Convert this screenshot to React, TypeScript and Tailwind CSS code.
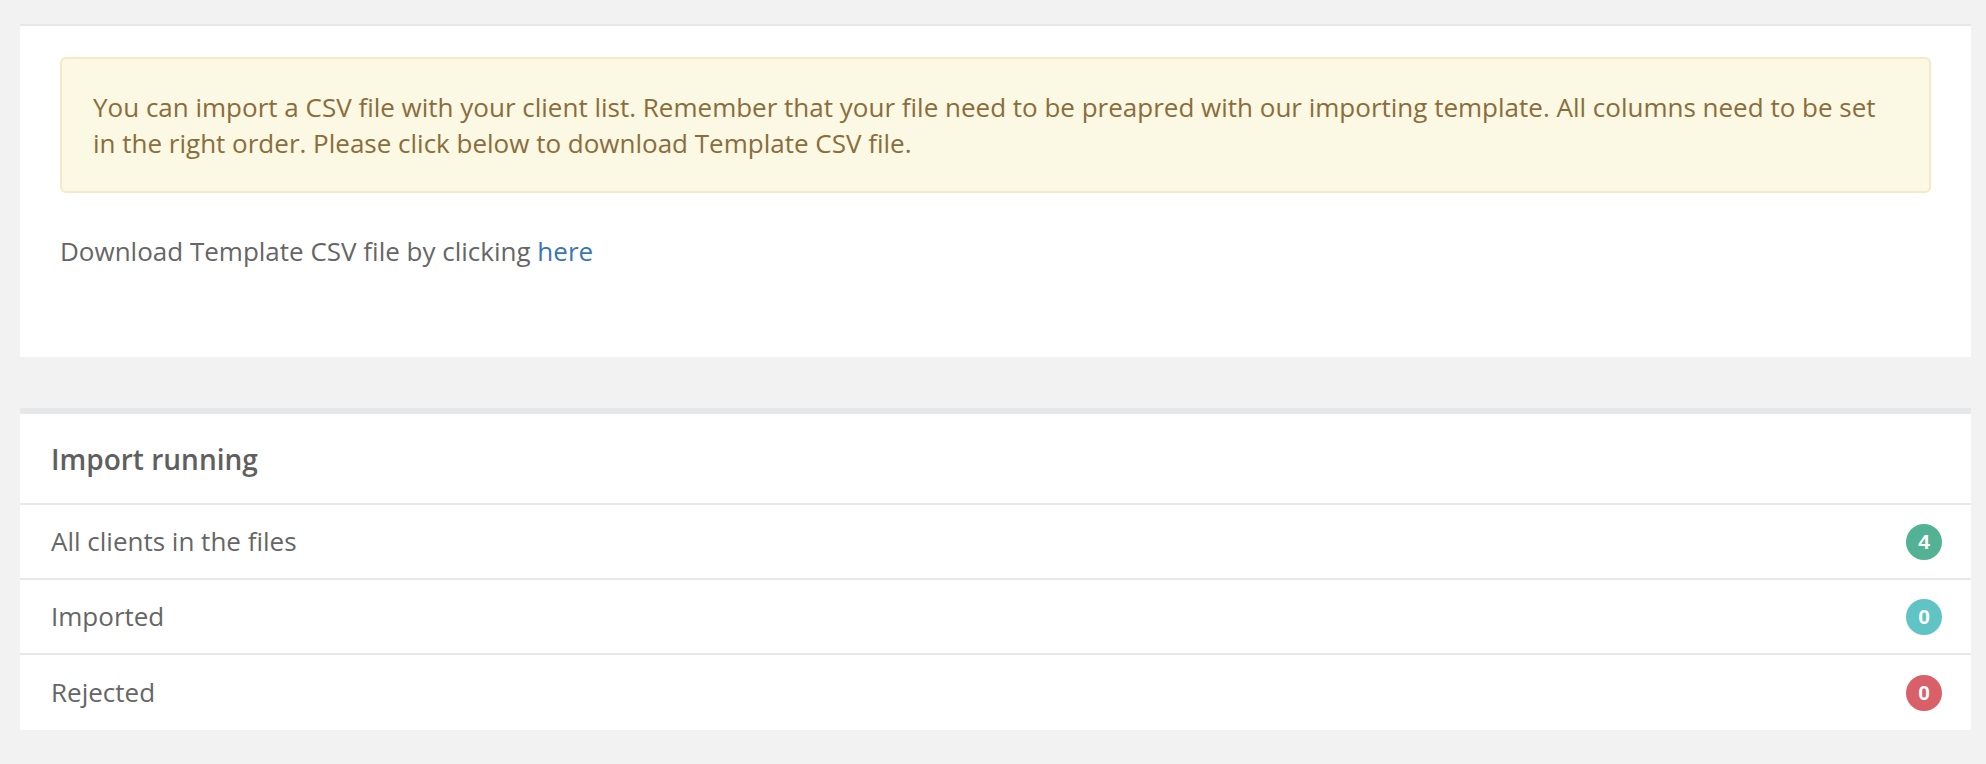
const rows = [
  { label: 'All clients in the files', count: 4, color: 'bg-[#54b294]' },
  { label: 'Imported', count: 0, color: 'bg-[#61c4c4]' },
  { label: 'Rejected', count: 0, color: 'bg-[#d95f69]' },
];

export default function App() {
  return (
    <div
      className="min-h-screen bg-[#f2f2f2] pt-[24px] pl-[20px] pr-[15px] pb-[31px] text-[#666666]"
      style={{ fontFamily: '"Open Sans", "Liberation Sans", sans-serif' }}
    >
      {/* Upload info */}
      <section className="bg-white border-t-2 border-[#e8e8e8] px-[40px] pt-[31px] pb-[88px]">
        <div className="bg-[#fbf8e4] border-2 border-[#f6e9ca] rounded-[6px] px-[31px] py-[30px] text-[#8a6d3b] text-[26px] leading-[36px]">
          You can import a CSV file with your client list. Remember that your file need to be preapred with our importing
          template. All columns need to be set in the right order. Please click below to download Template CSV file.
        </div>
        <p className="mt-[40px] text-[26px] leading-[36px] text-[#666666]">
          Download Template CSV file by clicking{' '}
          <a href="#" className="text-[#3a75b5]">
            here
          </a>
        </p>
      </section>

      {/* Import status */}
      <section className="mt-[51px] bg-white border-t-[6px] border-[#e6e7e8]">
        <div className="h-[91px] flex items-center px-[31px] border-b-2 border-[#e8e8e8]">
          <h2 className="text-[28px] font-semibold text-[#5f5f5f]">Import running</h2>
        </div>
        {rows.map((row, i) => (
          <div
            key={row.label}
            className={`h-[75px] flex items-center justify-between pl-[31px] pr-[29px] ${
              i < rows.length - 1 ? 'border-b-2 border-[#e8e8e8]' : ''
            }`}
          >
            <span className="text-[26px] text-[#666666]">{row.label}</span>
            <span
              className={`w-[36px] h-[36px] rounded-full ${row.color} text-white text-[21px] font-bold flex items-center justify-center`}
              style={{ fontFamily: '"Liberation Sans", Arial, sans-serif' }}
            >
              {row.count}
            </span>
          </div>
        ))}
      </section>
    </div>
  );
}
